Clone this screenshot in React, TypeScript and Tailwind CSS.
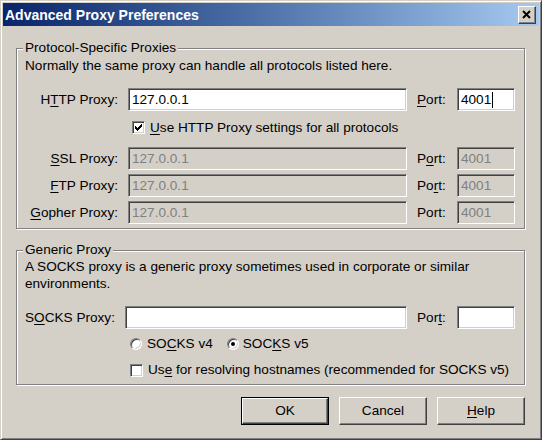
import * as React from "react";

const FONT = { fontFamily: '"Liberation Sans", Arial, sans-serif' };

function U({ children }: { children: React.ReactNode }) {
  return <span className="underline underline-offset-[2px] decoration-1">{children}</span>;
}

function Field({
  value,
  width,
  disabled,
  caret,
}: {
  value?: string;
  width: string;
  disabled?: boolean;
  caret?: boolean;
}) {
  return (
    <div
      className={`${width} h-[23px] flex items-center pl-[3px] border border-t-[#808080] border-l-[#808080] border-b-white border-r-white shadow-[inset_1px_1px_0_#404040,inset_-1px_-1px_0_#d4d0c8] ${
        disabled ? "bg-[#d4d0c8] text-[#808080]" : "bg-white text-black"
      }`}
    >
      <span>{value}</span>
      {caret && <span className="w-px h-[16px] bg-black ml-[1px]" />}
    </div>
  );
}

function CheckBox({ checked }: { checked?: boolean }) {
  return (
    <div className="w-[13px] h-[13px] shrink-0 bg-white border border-t-[#808080] border-l-[#808080] border-b-white border-r-white shadow-[inset_1px_1px_0_#404040,inset_-1px_-1px_0_#d4d0c8] flex items-center justify-center">
      {checked && (
        <svg width="7" height="7" viewBox="0 0 7 7">
          <path d="M0 2h1v1h1v1h1v-1h1v-1h1v-1h1v-1h1v3h-1v1h-1v1h-1v1h-1v1h-1v-1h-1v-1h-1z" fill="#000" />
        </svg>
      )}
    </div>
  );
}

function Radio({ checked }: { checked?: boolean }) {
  return (
    <div className="w-[12px] h-[12px] shrink-0 rounded-full bg-white border border-t-[#808080] border-l-[#808080] border-b-white border-r-white shadow-[inset_1px_1px_0_#404040,inset_-1px_-1px_0_#d4d0c8] flex items-center justify-center">
      {checked && <div className="w-[4px] h-[4px] rounded-full bg-black" />}
    </div>
  );
}

function Group({
  title,
  className,
  children,
}: {
  title: string;
  className: string;
  children: React.ReactNode;
}) {
  return (
    <div
      className={`relative border border-[#808080] shadow-[1px_1px_0_#fff,inset_1px_1px_0_#fff] ${className}`}
    >
      <span className="absolute left-[6px] top-[-9px] bg-[#d4d0c8] px-[2px] leading-[16px]">
        {title}
      </span>
      {children}
    </div>
  );
}

function Button({
  children,
  isDefault,
}: {
  children: React.ReactNode;
  isDefault?: boolean;
}) {
  return (
    <div
      className={`w-[88px] h-[28px] ${isDefault ? "border border-black" : ""}`}
    >
      <div className="w-full h-full flex items-center justify-center border border-t-white border-l-white border-b-[#404040] border-r-[#404040] shadow-[inset_-1px_-1px_0_#808080]">
        {children}
      </div>
    </div>
  );
}

const proxies = [
  { label: <><U>S</U>SL Proxy:</>, port: <>P<U>o</U>rt:</>, top: "mt-[13px]" },
  { label: <><U>F</U>TP Proxy:</>, port: <>Po<U>r</U>t:</>, top: "mt-[4px]" },
  { label: <><U>G</U>opher Proxy:</>, port: <>Port:</>, top: "mt-[4px]" },
];

export default function App() {
  return (
    <div
      style={FONT}
      className="w-[542px] h-[440px] bg-[#d4d0c8] text-[13.6px] leading-[16px] text-black border border-t-[#d4d0c8] border-l-[#d4d0c8] border-b-[#404040] border-r-[#404040] shadow-[inset_1px_1px_0_#fff,inset_-1px_-1px_0_#808080] p-[2px] select-none"
    >
      {/* title bar */}
      <div className="h-[23px] flex items-center justify-between pl-[2px] pr-[3px] bg-gradient-to-r from-[#0a246a] to-[#a6caf0]">
        <span className="text-white font-bold text-[14px]">Advanced Proxy Preferences</span>
        <div className="w-[18px] h-[18px] bg-[#d4d0c8] border border-t-white border-l-white border-b-[#404040] border-r-[#404040] shadow-[inset_-1px_-1px_0_#808080] flex items-center justify-center">
          <svg width="10" height="9" viewBox="0 0 10 9">
            <path d="M1 1L8 8M8 1L1 8" stroke="#000" strokeWidth="2" />
          </svg>
        </div>
      </div>

      <div className="pl-[13px]">
        <Group title="Protocol-Specific Proxies" className="mt-[22px] w-[509px] h-[181px]">
          <div className="pl-[8px] pt-[9px]">Normally the same proxy can handle all protocols listed here.</div>

          <div className="flex items-center mt-[14px]">
            <div className="w-[101px] text-right">
              H<U>T</U>TP Proxy:
            </div>
            <div className="ml-[10px]">
              <Field value="127.0.0.1" width="w-[279px]" />
            </div>
            <div className="ml-[10px] w-[40px]">
              <U>P</U>ort:
            </div>
            <Field value="4001" width="w-[58px]" caret />
          </div>

          <div className="flex items-center mt-[10px] ml-[115px] h-[13px]">
            <CheckBox checked />
            <span className="ml-[5px]">
              <U>U</U>se HTTP Proxy settings for all protocols
            </span>
          </div>

          {proxies.map((p, i) => (
            <div key={i} className={`flex items-center ${p.top}`}>
              <div className="w-[101px] text-right">{p.label}</div>
              <div className="ml-[10px]">
                <Field value="127.0.0.1" width="w-[279px]" disabled />
              </div>
              <div className="ml-[10px] w-[40px]">{p.port}</div>
              <Field value="4001" width="w-[58px]" disabled />
            </div>
          ))}
        </Group>

        <Group title="Generic Proxy" className="mt-[21px] w-[509px] h-[135px]">
          <div className="pl-[8px] pt-[7px] leading-[17px]">
            A SOCKS proxy is a generic proxy sometimes used in corporate or similar
            <br />
            environments.
          </div>

          <div className="flex items-center mt-[14px] pl-[8px]">
            <div className="w-[100px]">
              S<U>O</U>CKS Proxy:
            </div>
            <Field width="w-[282px]" />
            <div className="ml-[10px] w-[40px]">
              Por<U>t</U>:
            </div>
            <Field width="w-[58px]" />
          </div>

          <div className="flex items-center mt-[7px] h-[16px] ml-[113px]">
            <Radio />
            <span className="ml-[5px]">
              SO<U>C</U>KS v4
            </span>
            <div className="ml-[14px]">
              <Radio checked />
            </div>
            <span className="ml-[4px]">
              SOC<U>K</U>S v5
            </span>
          </div>

          <div className="flex items-center mt-[10px] h-[16px] ml-[113px]">
            <CheckBox />
            <span className="ml-[5px]">
              Us<U>e</U> for resolving hostnames (recommended for SOCKS v5)
            </span>
          </div>
        </Group>
      </div>

      <div className="flex justify-end gap-[10px] pr-[14px] mt-[12px]">
        <Button isDefault>OK</Button>
        <Button>Cancel</Button>
        <Button>
          <U>H</U>elp
        </Button>
      </div>
    </div>
  );
}
